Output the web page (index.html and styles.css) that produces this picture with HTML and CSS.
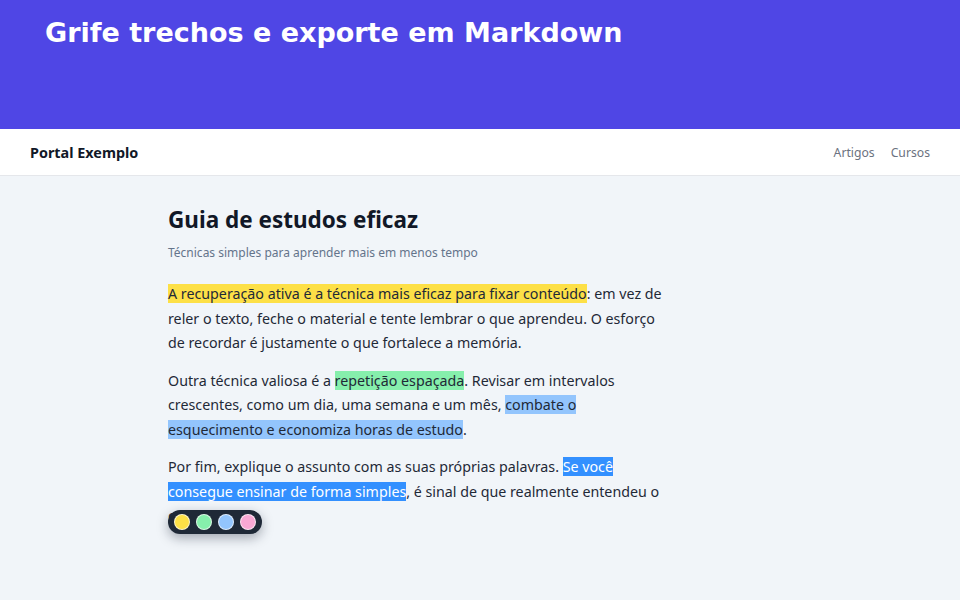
FILE: index.html
```html
<!DOCTYPE html>
<html lang="pt-BR">
<head>
<meta charset="utf-8">
<title>Grife trechos e exporte em Markdown</title>
<link rel="stylesheet" href="styles.css">
</head>
<body>
<header class="banner">
  <h1 class="banner-title">Grife trechos e exporte em Markdown</h1>
</header>
<nav class="topnav">
  <div class="brand">Portal Exemplo</div>
  <div class="links">
    <a href="#">Artigos</a>
    <a href="#">Cursos</a>
  </div>
</nav>
<main class="content">
  <article class="article">
    <h2 class="title">Guia de estudos eficaz</h2>
    <p class="subtitle">Técnicas simples para aprender mais em menos tempo</p>
    <p class="body"><mark class="hl-yellow">A recuperação ativa é a técnica mais eficaz para fixar conteúdo</mark>: em vez de reler o texto, feche o material e tente lembrar o que aprendeu. O esforço de recordar é justamente o que fortalece a memória.</p>
    <p class="body">Outra técnica valiosa é a <mark class="hl-green">repetição espaçada</mark>. Revisar em intervalos crescentes, como um dia, uma semana e um mês, <mark class="hl-blue">combate o esquecimento e economiza horas de estudo</mark>.</p>
    <p class="body last">Por fim, explique o assunto com as suas próprias palavras. <span class="selected">Se você consegue ensinar de forma simples</span>, é sinal de que realmente entendeu o conteúdo.
      <span class="toolbar">
        <span class="dot dot-yellow"></span>
        <span class="dot dot-green"></span>
        <span class="dot dot-blue"></span>
        <span class="dot dot-pink"></span>
      </span>
    </p>
  </article>
</main>
</body>
</html>
```
FILE: styles.css
```css
html, body {
  margin: 0;
  padding: 0;
}
body {
  background: #f1f5f9;
  font-family: "Noto Sans", "Open Sans", sans-serif;
  color: #1f2937;
  min-height: 600px;
}
.banner {
  background: #4f46e5;
  height: 129px;
  box-sizing: border-box;
  padding: 15px 45px 0;
}
.banner-title {
  margin: 0;
  font-family: "DejaVu Sans", Verdana, sans-serif;
  font-weight: bold;
  font-size: 27px;
  line-height: 36px;
  color: #ffffff;
}
.topnav {
  background: #ffffff;
  height: 46px;
  border-bottom: 1px solid #e5e7eb;
  display: flex;
  align-items: center;
  justify-content: space-between;
  padding: 0 30px;
}
.brand {
  font-weight: 700;
  font-size: 14.4px;
  color: #111827;
}
.links {
  display: flex;
  gap: 16px;
}
.links a {
  font-size: 12.2px;
  color: #6b7280;
  text-decoration: none;
}
.content {
  padding: 28px 0 0 168px;
}
.article {
  max-width: 500px;
}
.title {
  margin: 0;
  font-size: 22.5px;
  line-height: 32px;
  font-weight: 700;
  color: #111827;
}
.subtitle {
  margin: 7px 0 19px;
  font-size: 12px;
  line-height: 20px;
  color: #64748b;
}
.body {
  font-size: 14.25px;
  line-height: 24.5px;
  margin: 0 0 13px;
}
mark {
  color: inherit;
  padding: 0;
}
.hl-yellow { background: #fde047; }
.hl-green { background: #86efac; }
.hl-blue { background: #93c5fd; }
.selected {
  background: #3390ff;
  color: #ffffff;
}
.last {
  position: relative;
}
.toolbar {
  position: absolute;
  left: 0;
  top: 55px;
  display: flex;
  gap: 6px;
  padding: 4px 6px;
  background: #1f2937;
  border-radius: 12px;
  box-shadow: 0 4px 12px rgba(15, 23, 42, 0.35);
}
.dot {
  width: 14px;
  height: 14px;
  border-radius: 50%;
  border: 1px solid rgba(255, 255, 255, 0.7);
}
.dot-yellow { background: #fde047; }
.dot-green { background: #86efac; }
.dot-blue { background: #93c5fd; }
.dot-pink { background: #f9a8d4; }
```
